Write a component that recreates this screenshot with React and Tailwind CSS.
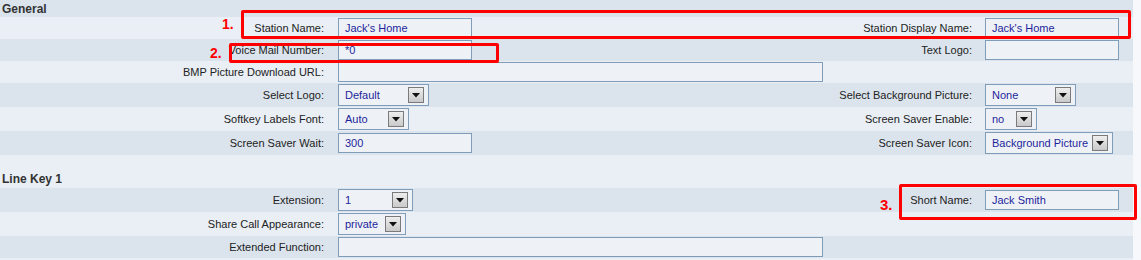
import React from "react";

const DARK = "bg-[#dbe4ed]";
const LIGHT = "bg-[#e9eff5]";

function TextBox({ value = "", w }) {
  return (
    <div className={`${w} h-[20px] border border-[#7f9db9] bg-[#eef2f6] pl-[6px] flex items-center text-[11px] text-[#1f1f9c]`}>
      {value}
    </div>
  );
}

function SelectBox({ value, w }) {
  return (
    <div className={`${w} h-[22px] border border-[#7f9db9] bg-[#eef2f6] pl-[6px] pr-[4px] flex items-center justify-between text-[11px] text-[#1f1f9c]`}>
      <span className="whitespace-nowrap">{value}</span>
      <div className="w-[16px] h-[16px] border border-[#7a7a7a] bg-gradient-to-b from-[#eeeeee] to-[#c9c9c9] flex items-center justify-center shrink-0">
        <svg width="8" height="5" viewBox="0 0 8 5">
          <polygon points="0,0 8,0 4,4.5" fill="#111" />
        </svg>
      </div>
    </div>
  );
}

function Row({ bg, h, l1, v1, l2, v2 }) {
  return (
    <div className={`grid grid-cols-[332px_498px_150px_153px] ${bg} ${h} items-center text-[11px] text-[#222]`}>
      <div className="text-right pr-[8px] whitespace-nowrap">{l1}</div>
      <div className="pl-[6px]">{v1}</div>
      <div className="text-right pr-[8px] whitespace-nowrap">{l2}</div>
      <div className="pl-[5px]">{v2}</div>
    </div>
  );
}

function Header({ bg, h, children }) {
  return (
    <div className={`${bg} ${h} flex items-center pl-[2px] text-[12px] font-bold text-[#333]`}>
      {children}
    </div>
  );
}

export default function App() {
  return (
    <div className="relative w-[1141px] h-[260px] bg-[#f6f8fb] overflow-hidden" style={{ fontFamily: '"Liberation Sans", Arial, sans-serif' }}>
      <div className="w-[1133px]">
        <Header bg={DARK} h="h-[17px]">General</Header>
        <Row bg={LIGHT} h="h-[22px]" l1="Station Name:" v1={<TextBox value="Jack's Home" w="w-[134px]" />} l2="Station Display Name:" v2={<TextBox value="Jack's Home" w="w-[134px]" />} />
        <Row bg={DARK} h="h-[22px]" l1="Voice Mail Number:" v1={<TextBox value="*0" w="w-[134px]" />} l2="Text Logo:" v2={<TextBox w="w-[134px]" />} />
        <Row bg={LIGHT} h="h-[22px]" l1="BMP Picture Download URL:" v1={<TextBox w="w-[485px]" />} l2="" v2={null} />
        <Row bg={DARK} h="h-[24px]" l1="Select Logo:" v1={<SelectBox value="Default" w="w-[91px]" />} l2="Select Background Picture:" v2={<SelectBox value="None" w="w-[91px]" />} />
        <Row bg={LIGHT} h="h-[24px]" l1="Softkey Labels Font:" v1={<SelectBox value="Auto" w="w-[71px]" />} l2="Screen Saver Enable:" v2={<SelectBox value="no" w="w-[52px]" />} />
        <Row bg={DARK} h="h-[24px]" l1="Screen Saver Wait:" v1={<TextBox value="300" w="w-[134px]" />} l2="Screen Saver Icon:" v2={<SelectBox value="Background Picture" w="w-[128px]" />} />
        <div className={`${LIGHT} h-[15px]`} />
        <Header bg={LIGHT} h="h-[18px]">Line Key 1</Header>
        <Row bg={DARK} h="h-[24px]" l1="Extension:" v1={<SelectBox value="1" w="w-[75px]" />} l2="Short Name:" v2={<TextBox value="Jack Smith" w="w-[134px]" />} />
        <Row bg={LIGHT} h="h-[24px]" l1="Share Call Appearance:" v1={<SelectBox value="private" w="w-[68px]" />} l2="" v2={null} />
        <Row bg={DARK} h="h-[22px]" l1="Extended Function:" v1={<TextBox w="w-[485px]" />} l2="" v2={null} />
        <div className={`${LIGHT} h-[10px]`} />
      </div>

      <div className="absolute left-[241px] top-[10px] w-[890px] h-[29px] border-[3px] border-[#ff0000] rounded-[2px]" />
      <div className="absolute left-[229px] top-[43px] w-[270px] h-[20px] border-[3px] border-[#ff0000] rounded-[2px]" />
      <div className="absolute left-[899px] top-[184px] w-[238px] h-[36px] border-[3px] border-[#ff0000] rounded-[2px]" />

      <div className="absolute left-[222px] top-[16px] text-[14px] leading-[16px] font-bold text-[#ff0000]">1.</div>
      <div className="absolute left-[210px] top-[45px] text-[14px] leading-[16px] font-bold text-[#ff0000]">2.</div>
      <div className="absolute left-[880px] top-[196px] text-[15px] leading-[17px] font-bold text-[#ff0000]">3.</div>
    </div>
  );
}
